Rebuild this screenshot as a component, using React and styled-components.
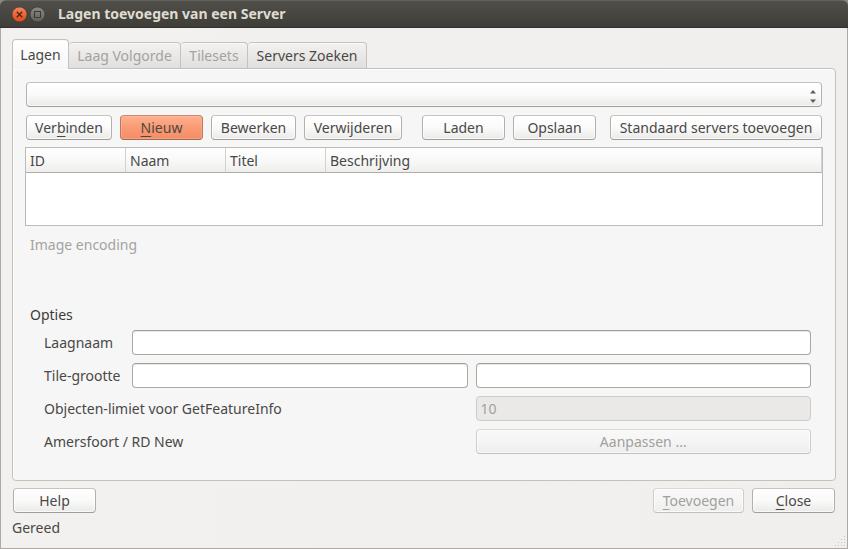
import React from "react";
import styled, { createGlobalStyle, css } from "styled-components";

const GlobalStyle = createGlobalStyle`
  *, *::before, *::after { box-sizing: border-box; }
  body {
    margin: 0;
    background: #f2f0ee;
    color: #4a4846;
    font: 14px/20px "Noto Sans", "Open Sans", sans-serif;
  }
  button, input, select { font: inherit; color: inherit; }
`;

const Window = styled.div`
  display: flex;
  flex-direction: column;
  min-height: 100vh;
  background: #8a8985;
`;

const TitleBar = styled.header`
  display: flex;
  align-items: center;
  gap: 3px;
  height: 28px;
  padding: 0 12px 0 12px;
  border-top: 1px solid #64625c;
  border-bottom: 1px solid #31302c;
  border-radius: 6px 6px 0 0;
  background: linear-gradient(#504f49, #3e3d38);
`;

const WindowButton = styled.button`
  display: flex;
  width: 15px;
  height: 15px;
  padding: 0;
  border: 0;
  background: none;

  svg { display: block; overflow: visible; }
`;

const Title = styled.h1`
  margin: 0 0 0 10px;
  color: #dfdbd2;
  font-size: 14px;
  line-height: 20px;
  font-weight: 700;
`;

const Body = styled.main`
  display: flex;
  flex: 1;
  flex-direction: column;
  padding: 11px 11px 0;
  border: solid #aea9a2;
  border-width: 0 1px 1px;
  background: linear-gradient(90deg, #f3f1ef, #f0efed);
`;

const TabList = styled.div`
  display: flex;
  align-items: flex-end;
  height: 30px;
  margin-bottom: -1px;
`;

const Tab = styled.button`
  width: ${(p) => p.$width}px;
  height: 27px;
  padding: 0;
  border: 1px solid #c5c2be;
  border-left-width: ${(p) => (p.$joined ? 0 : 1)}px;
  border-radius: 4px 4px 0 0;
  background: linear-gradient(#f3f2f1, #e0dfdd);
  box-shadow: inset 0 1px #faf9f9;
  white-space: nowrap;

  &:disabled { color: #a5a29f; }

  &[aria-selected="true"] {
    z-index: 1;
    height: 30px;
    border-bottom: 0;
    background: linear-gradient(#ffffff, #f6f6f6);
  }
`;

const Panel = styled.section`
  display: flex;
  flex: 1;
  flex-direction: column;
  padding: 13px 12px 26px;
  border: 1px solid #c5c2be;
  border-radius: 0 4px 4px 4px;
  background: #f6f6f6;
  box-shadow: inset 0 1px #fdfdfd, inset 1px 0 #fdfdfd;
`;

const raised = css`
  border: 1px solid;
  border-color: #c6c4c0 #b3b0ac #a09d99;
  border-radius: 4px;
  background: linear-gradient(#ffffff, #fafafa 50%, #eaeae8);
  box-shadow: inset 0 0 0 1px rgba(255, 255, 255, 0.7);
`;

const Button = styled.button`
  ${raised}
  flex: ${(p) => (p.$grow ? "1" : "0")} 0 ${(p) => p.$width || 83}px;
  height: 25px;
  padding: 0;
  line-height: 23px;
  white-space: nowrap;

  ${(p) =>
    p.$primary &&
    css`
      border-color: #c98a74 #b37a66 #a06b58;
      background: linear-gradient(#ffb191, #f99a74 50%, #f58d66);
      box-shadow: inset 0 0 0 1px rgba(255, 190, 160, 0.4);
    `}

  &:disabled {
    border-color: #dad8d5 #cfccc9 #c2bfbc;
    background: linear-gradient(#f8f8f8, #f5f5f5 50%, #ededec);
    color: #a29f9c;
  }
`;

const Mnemonic = styled.span`
  text-decoration: underline;
  text-decoration-thickness: 1px;
  text-underline-offset: 3px;
`;

const ServerPicker = styled.div`
  display: grid;
  margin: 0 1px 8px;
`;

const ServerSelect = styled.select`
  ${raised}
  grid-area: 1 / 1;
  width: 100%;
  height: 25px;
  appearance: none;
`;

const PickerArrows = styled.svg`
  grid-area: 1 / 1;
  place-self: center end;
  margin: 4px 6px 0 0;
  pointer-events: none;
`;

const Actions = styled.div`
  display: flex;
  justify-content: space-between;
  gap: 14px;
  margin: 0 1px 7px;
`;

const ActionGroup = styled.div`
  display: flex;
  flex: ${(p) => (p.$grow ? "1" : "none")};
  gap: 8px;
  padding-right: ${(p) => (p.$spaced ? 6 : 0)}px;
`;

const TableFrame = styled.div`
  flex: 1 0 79px;
  max-height: 79px;
  border: 1px solid #bdbbb7;
  background: #ffffff;
`;

const LayerTable = styled.table`
  width: 100%;
  border-collapse: separate;
  border-spacing: 0;
  table-layout: fixed;
`;

const HeaderCell = styled.th`
  width: ${(p) => (p.$width ? `${p.$width}px` : "auto")};
  height: 25px;
  padding: 2px 4px 0;
  border-right: 1px solid #d3d1ce;
  border-bottom: 1px solid #aeaca9;
  background: linear-gradient(#ffffff, #f9f9f9 50%, #eeeeec);
  font-weight: 400;
  text-align: left;
`;

const EncodingLabel = styled.div`
  margin: 9px 5px 50px;
  color: #a5a29f;
`;

const Options = styled.fieldset`
  margin: 0;
  padding: 0 12px 0 19px;
  border: 0;
  min-width: 0;
`;

const OptionsLegend = styled.legend`
  margin: 0 0 5px -14px;
  padding: 0;
  color: #3c3b39;
`;

const OptionsGrid = styled.div`
  display: grid;
  grid-template-columns: 80px 1fr 1fr;
  grid-auto-rows: 25px;
  align-items: center;
  gap: 8px;
`;

const Label = styled.label`
  grid-column: span ${(p) => p.$span || 1};
  white-space: nowrap;
`;

const Cell = styled.div`
  display: flex;
  grid-column: span ${(p) => p.$span || 1};
`;

const TextInput = styled.input`
  width: 100%;
  min-width: 0;
  height: 25px;
  padding: 0 4px;
  border: 1px solid #aba7a1;
  border-top-color: #a09c97;
  border-radius: 4px;
  background: #ffffff;
  box-shadow: inset 0 1px #ebe9e7;

  &:disabled {
    border-color: #cfccc8;
    background: #ebe9e8;
    box-shadow: none;
    color: #a29f9c;
  }
`;

const Footer = styled.div`
  display: flex;
  gap: 8px;
  margin: 7px 1px 5px;
`;

const Spacer = styled.div`
  flex: 1;
`;

const StatusBar = styled.footer`
  display: flex;
  align-items: flex-end;
  justify-content: space-between;
  height: 30px;
  margin-right: -11px;
`;

const StatusText = styled.span`
  align-self: flex-start;
`;

const actionGroups = [
  {
    spaced: true,
    items: [
      { text: "Verbinden", mnemonic: 3, width: 86 },
      { text: "Nieuw", mnemonic: 0, primary: true },
      { text: "Bewerken", width: 85 },
      { text: "Verwijderen", width: 98 },
    ],
  },
  { items: [{ text: "Laden" }, { text: "Opslaan" }] },
  { grow: true, items: [{ text: "Standaard servers toevoegen", width: 208, grow: true }] },
];

const columns = [
  { name: "ID", width: 100 },
  { name: "Naam", width: 100 },
  { name: "Titel", width: 100 },
  { name: "Beschrijving" },
];

const gripDots = [[9, 0], [6, 3], [9, 3], [3, 6], [6, 6], [9, 6], [0, 9], [3, 9], [6, 9], [9, 9]];

function Caption({ text, mnemonic }) {
  if (mnemonic === undefined) return text;
  return (
    <>
      {text.slice(0, mnemonic)}
      <Mnemonic>{text[mnemonic]}</Mnemonic>
      {text.slice(mnemonic + 1)}
    </>
  );
}

export default function App() {
  return (
    <>
      <GlobalStyle />
      <Window>
        <TitleBar>
          <WindowButton aria-label="Sluiten">
            <svg width="15" height="15" viewBox="0 0 15 15">
              <defs>
                <linearGradient id="close" x1="0" y1="0" x2="0" y2="1">
                  <stop offset="0" stopColor="#f7845d" />
                  <stop offset="1" stopColor="#dd4814" />
                </linearGradient>
              </defs>
              <circle cx="7.5" cy="7.5" r="7.5" fill="url(#close)" stroke="#3a342f" strokeWidth="0.6" />
              <path d="M4.8 4.8l5.4 5.4M10.2 4.8l-5.4 5.4" stroke="#4c2213" strokeWidth="1.3" />
            </svg>
          </WindowButton>
          <WindowButton aria-label="Maximaliseren">
            <svg width="15" height="15" viewBox="0 0 15 15">
              <defs>
                <linearGradient id="maximize" x1="0" y1="0" x2="0" y2="1">
                  <stop offset="0" stopColor="#8b8a83" />
                  <stop offset="1" stopColor="#5f5e58" />
                </linearGradient>
              </defs>
              <circle cx="7.5" cy="7.5" r="7.5" fill="url(#maximize)" stroke="#33322e" strokeWidth="0.6" />
              <rect x="4.5" y="4.5" width="6" height="6" fill="none" stroke="#3b3a36" />
            </svg>
          </WindowButton>
          <Title>Lagen toevoegen van een Server</Title>
        </TitleBar>
        <Body>
          <TabList role="tablist">
            <Tab role="tab" aria-selected="true" $width={57}>Lagen</Tab>
            <Tab role="tab" aria-selected="false" disabled $joined $width={112}>Laag Volgorde</Tab>
            <Tab role="tab" aria-selected="false" disabled $joined $width={67}>Tilesets</Tab>
            <Tab role="tab" aria-selected="false" $joined $width={119}>Servers Zoeken</Tab>
          </TabList>
          <Panel role="tabpanel">
            <ServerPicker>
              <ServerSelect aria-label="Server" />
              <PickerArrows width="6" height="13" viewBox="0 0 6 13" fill="#5f5d5b">
                <path d="M0 3.5L3 0 6 3.5z" />
                <path d="M0 9.5L3 13 6 9.5z" />
              </PickerArrows>
            </ServerPicker>
            <Actions>
              {actionGroups.map((group) => (
                <ActionGroup key={group.items[0].text} $spaced={group.spaced} $grow={group.grow}>
                  {group.items.map((item) => (
                    <Button key={item.text} $width={item.width} $primary={item.primary} $grow={item.grow}>
                      <Caption text={item.text} mnemonic={item.mnemonic} />
                    </Button>
                  ))}
                </ActionGroup>
              ))}
            </Actions>
            <TableFrame>
              <LayerTable>
                <thead>
                  <tr>
                    {columns.map((column) => (
                      <HeaderCell key={column.name} $width={column.width} scope="col">
                        {column.name}
                      </HeaderCell>
                    ))}
                  </tr>
                </thead>
              </LayerTable>
            </TableFrame>
            <EncodingLabel>Image encoding</EncodingLabel>
            <Options>
              <OptionsLegend>Opties</OptionsLegend>
              <OptionsGrid>
                <Label htmlFor="layer-name">Laagnaam</Label>
                <Cell $span={2}>
                  <TextInput id="layer-name" type="text" />
                </Cell>
                <Label htmlFor="tile-width">Tile-grootte</Label>
                <TextInput id="tile-width" type="text" />
                <TextInput type="text" aria-label="Tile-hoogte" />
                <Label htmlFor="feature-limit" $span={2}>Objecten-limiet voor GetFeatureInfo</Label>
                <TextInput id="feature-limit" type="text" defaultValue="10" disabled />
                <Label htmlFor="change-crs" $span={2}>Amersfoort / RD New</Label>
                <Button id="change-crs" disabled>Aanpassen ...</Button>
              </OptionsGrid>
            </Options>
          </Panel>
          <Footer>
            <Button>Help</Button>
            <Spacer />
            <Button disabled $width={91}>
              <Caption text="Toevoegen" mnemonic={0} />
            </Button>
            <Button>
              <Caption text="Close" mnemonic={0} />
            </Button>
          </Footer>
          <StatusBar>
            <StatusText>Gereed</StatusText>
            <svg width="12" height="12" viewBox="0 0 12 12" fill="#c9c6c2" aria-hidden="true">
              {gripDots.map(([x, y]) => (
                <rect key={`${x}-${y}`} x={x} y={y} width="1" height="1" />
              ))}
            </svg>
          </StatusBar>
        </Body>
      </Window>
    </>
  );
}
